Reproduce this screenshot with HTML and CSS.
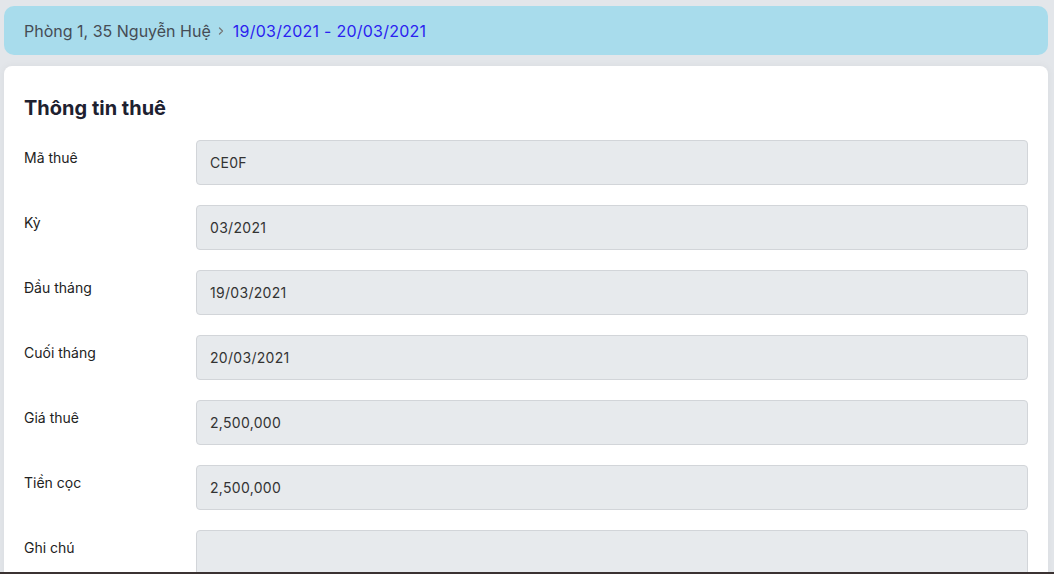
FILE: index.html
```html
<!DOCTYPE html>
<html lang="vi">
<head>
<meta charset="UTF-8" />
<meta name="viewport" content="width=device-width, initial-scale=1.0"/>
<title>Thông tin thuê</title>
<link rel="stylesheet" href="styles.css">
</head>
<body>

<div class="page">
    <div class="breadcrumb">
        <span class="crumb">Phòng 1, 35 Nguyễn Huệ</span>
        <svg class="sep" width="10" height="10" viewBox="0 0 10 10"><path d="M3.5 2 L6.5 5 L3.5 8" fill="none" stroke="#777" stroke-width="1.3" stroke-linecap="round" stroke-linejoin="round"/></svg>
        <span class="crumb current">19/03/2021 - 20/03/2021</span>
    </div>

    <div class="card">
        <h2 class="card-title">Thông tin thuê</h2>

        <div class="form-row">
            <label>Mã thuê</label>
            <div class="field">CE0F</div>
        </div>
        <div class="form-row">
            <label>Kỳ</label>
            <div class="field">03/2021</div>
        </div>
        <div class="form-row">
            <label>Đầu tháng</label>
            <div class="field">19/03/2021</div>
        </div>
        <div class="form-row">
            <label>Cuối tháng</label>
            <div class="field">20/03/2021</div>
        </div>
        <div class="form-row">
            <label>Giá thuê</label>
            <div class="field">2,500,000</div>
        </div>
        <div class="form-row">
            <label>Tiền cọc</label>
            <div class="field">2,500,000</div>
        </div>
        <div class="form-row">
            <label>Ghi chú</label>
            <div class="field tall"></div>
        </div>
    </div>
</div>

<div class="window-edge"></div>

</body>
</html>
```

FILE: styles.css
```css
body {
    font-family: Inter, "Noto Sans", sans-serif;
    background: #e3e6ea;
    color: #333333;
    margin: 0;
    padding: 0;
    overflow: hidden;
}

.page {
    padding: 6px 6px 0 4px;
}

.breadcrumb {
    display: flex;
    align-items: center;
    height: 49px;
    padding: 0 20px;
    background: #a8dcec;
    border-radius: 10px;
    font-size: 16px;
}

.crumb {
    color: #454c55;
}

.crumb.current {
    color: #2b22f0;
    letter-spacing: 0.25px;
}

.sep {
    margin: 0 7px 0 5px;
}

.card {
    margin-top: 11px;
    padding: 26px 20px 20px 20px;
    background: #ffffff;
    border-radius: 8px;
    box-shadow: 0 0 8px rgba(0, 0, 0, 0.05);
}

.card-title {
    margin: 0 0 16px 0;
    font-size: 20px;
    font-weight: 700;
    color: #1e2130;
    line-height: 32px;
}

.form-row {
    display: flex;
    align-items: flex-start;
    margin-bottom: 20px;
}

.form-row label {
    width: 172px;
    flex-shrink: 0;
    font-size: 14px;
    color: #222;
    padding-top: 9px;
}

.field {
    flex: 1;
    height: 43px;
    line-height: 43px;
    padding: 0 13px;
    background: #e7eaed;
    border: 1px solid #d2d5d9;
    border-radius: 4px;
    font-size: 14px;
    color: #333;
    letter-spacing: 0.3px;
}

.field.tall {
    height: 80px;
}

/* viền dưới của cửa sổ */
.window-edge {
    position: fixed;
    left: 0;
    right: 0;
    bottom: 0;
    height: 2px;
    background: #3b3232;
}
```
